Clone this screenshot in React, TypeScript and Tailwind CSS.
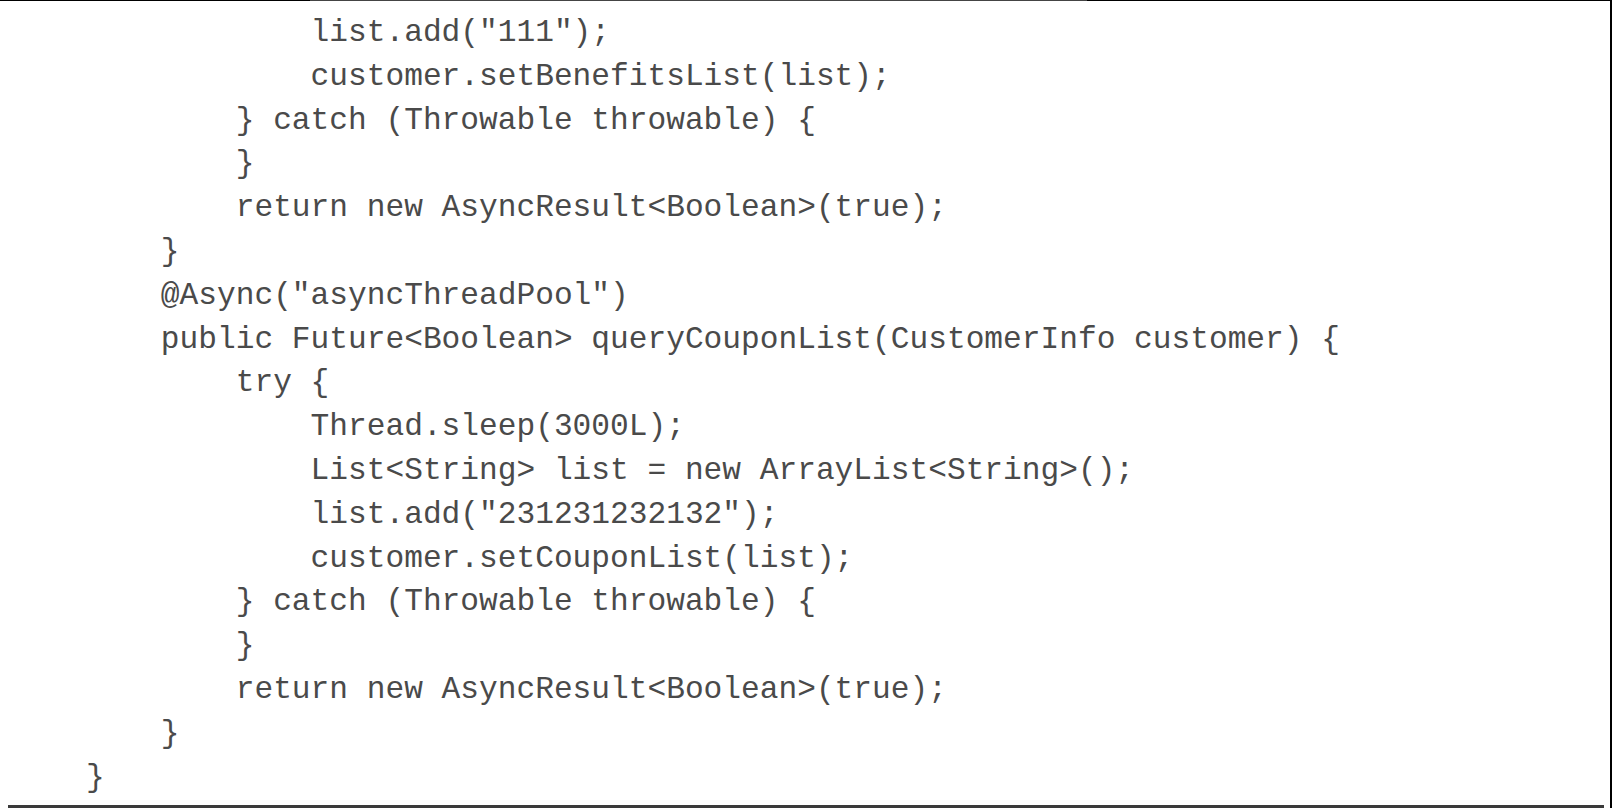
const lines: [number, string][] = [
  [12, 'list.add("111");'],
  [12, "customer.setBenefitsList(list);"],
  [8, "} catch (Throwable throwable) {"],
  [8, "}"],
  [8, "return new AsyncResult<Boolean>(true);"],
  [4, "}"],
  [4, '@Async("asyncThreadPool")'],
  [4, "public Future<Boolean> queryCouponList(CustomerInfo customer) {"],
  [8, "try {"],
  [12, "Thread.sleep(3000L);"],
  [12, "List<String> list = new ArrayList<String>();"],
  [12, 'list.add("231231232132");'],
  [12, "customer.setCouponList(list);"],
  [8, "} catch (Throwable throwable) {"],
  [8, "}"],
  [8, "return new AsyncResult<Boolean>(true);"],
  [4, "}"],
  [0, "}"],
];

export default function App() {
  return (
    <div className="flex h-[808px] w-[1612px] overflow-hidden bg-white">
      <div className="flex flex-1 flex-col">
        <div className="flex h-px">
          <div className="w-[310px] bg-black" />
          <div className="w-[777px] bg-[#444]" />
          <div className="flex-1 bg-black" />
        </div>
        <pre className="flex-1 whitespace-pre pl-[86px] pt-[10px] font-['Liberation_Mono',monospace] text-[31.2px] leading-[43.8px] text-[#4a4a4a]">
          {lines.map(([indent, text], i) => (
            <div key={i}>{" ".repeat(indent) + text}</div>
          ))}
        </pre>
        <div className="ml-[8px] mr-[6px] h-[3px] bg-[#3a3a3a]" />
      </div>
      <div className="w-[2px] bg-black" />
    </div>
  );
}
